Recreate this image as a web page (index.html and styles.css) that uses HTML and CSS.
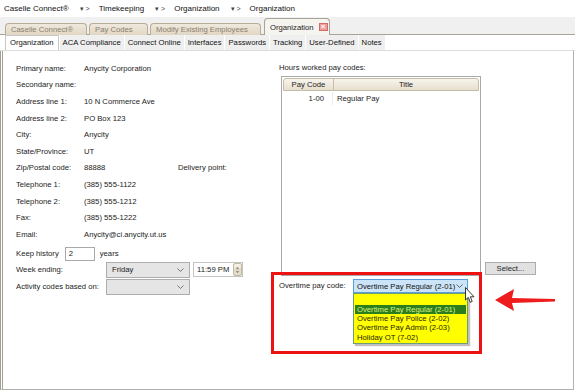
FILE: index.html
```html
<!DOCTYPE html>
<html lang="en">
<head>
    <meta charset="UTF-8">
    <title>Organization</title>
    <link rel="stylesheet" href="styles.css">
</head>
<body>
    <div class="window">
        <div class="crumbs">
            <span>Caselle Connect®</span><span class="sep">▾ &gt;</span>
            <span>Timekeeping</span><span class="sep">▾ &gt;</span>
            <span>Organization</span><span class="sep">▾ &gt;</span>
            <span>Organization</span>
        </div>

        <div class="doc-tabs">
            <div class="doc-tab tab-a">Caselle Connect®</div>
            <div class="doc-tab tab-b">Pay Codes</div>
            <div class="doc-tab tab-c">Modify Existing Employees</div>
            <div class="doc-tab active">Organization <span class="close">×</span></div>
        </div>

        <div class="prop-tabs">
            <div class="prop-tab active">Organization</div>
            <div class="prop-tab">ACA Compliance</div>
            <div class="prop-tab">Connect Online</div>
            <div class="prop-tab">Interfaces</div>
            <div class="prop-tab">Passwords</div>
            <div class="prop-tab">Tracking</div>
            <div class="prop-tab">User-Defined</div>
            <div class="prop-tab">Notes</div>
        </div>

        <div class="panel">
            <div class="left">
                <div class="info">
                    <span>Primary name:</span><span>Anycity Corporation</span><span></span>
                    <span>Secondary name:</span><span></span><span></span>
                    <span>Address line 1:</span><span>10 N Commerce Ave</span><span></span>
                    <span>Address line 2:</span><span>PO Box 123</span><span></span>
                    <span>City:</span><span>Anycity</span><span></span>
                    <span>State/Province:</span><span>UT</span><span></span>
                    <span>Zip/Postal code:</span><span>88888</span><span>Delivery point:</span>
                    <span>Telephone 1:</span><span>(385) 555-1122</span><span></span>
                    <span>Telephone 2:</span><span>(385) 555-1212</span><span></span>
                    <span>Fax:</span><span>(385) 555-1222</span><span></span>
                    <span>Email:</span><span>Anycity@ci.anycity.ut.us</span><span></span>
                </div>

                <div class="history">
                    <span>Keep history</span>
                    <div class="textbox">2</div>
                    <span>years</span>
                </div>

                <div class="field-row">
                    <span class="field-label">Week ending:</span>
                    <div class="combo">
                        <span>Friday</span>
                        <svg class="chev" width="7" height="4" viewBox="0 0 7 4"><polyline points="0.5,0.5 3.5,3.5 6.5,0.5" fill="none" stroke="#6a6a6a" stroke-width="0.9"/></svg>
                    </div>
                    <div class="timebox">
                        <span>11:59 PM</span>
                        <div class="spin">
                            <svg width="8" height="12" viewBox="0 0 8 12">
                                <polygon points="2,4.5 6,4.5 4,2.5" fill="#777"/>
                                <line x1="0" y1="6" x2="8" y2="6" stroke="#c9bfa8" stroke-width="0.8"/>
                                <polygon points="2,7.5 6,7.5 4,9.5" fill="#777"/>
                            </svg>
                        </div>
                    </div>
                </div>

                <div class="field-row">
                    <span class="field-label">Activity codes based on:</span>
                    <div class="combo">
                        <span></span>
                        <svg class="chev" width="7" height="4" viewBox="0 0 7 4"><polyline points="0.5,0.5 3.5,3.5 6.5,0.5" fill="none" stroke="#6a6a6a" stroke-width="0.9"/></svg>
                    </div>
                </div>
            </div>

            <div class="right">
                <div class="grid-label">Hours worked pay codes:</div>
                <div class="grid-row">
                    <div class="grid">
                        <div class="grid-head">
                            <div class="col-code">Pay Code</div>
                            <div class="col-title">Title</div>
                        </div>
                        <div class="grid-line">
                            <div class="col-code">1-00</div>
                            <div class="col-title">Regular Pay</div>
                        </div>
                    </div>
                    <div class="button">Select...</div>
                </div>

                <div class="ot-row">
                    <span class="ot-label">Overtime pay code:</span>
                    <div class="ot-wrap">
                        <div class="ot-combo">
                            <span>Overtime Pay Regular (2-01)</span>
                            <svg class="chev" width="7" height="4" viewBox="0 0 7 4"><polyline points="0.5,0.5 3.5,3.5 6.5,0.5" fill="none" stroke="#555" stroke-width="0.9"/></svg>
                        </div>
                        <div class="ot-list">
                            <div class="ot-item"></div>
                            <div class="ot-item selected">Overtime Pay Regular (2-01)</div>
                            <div class="ot-item">Overtime Pay Police (2-02)</div>
                            <div class="ot-item">Overtime Pay Admin (2-03)</div>
                            <div class="ot-item">Holiday OT (7-02)</div>
                        </div>
                        <svg class="cursor" width="11" height="17" viewBox="0 0 11 17">
                            <path d="M0.5,0.5 L0.5,13 L3.3,10.4 L5.3,15.3 L7.2,14.5 L5.3,9.8 L9,9.8 Z" fill="#fff" stroke="#222" stroke-width="0.9" stroke-linejoin="round"/>
                        </svg>
                    </div>
                </div>
            </div>

            <div class="callout"></div>
            <svg class="arrow" width="62" height="24" viewBox="0 0 62 24">
                <polygon points="0,11 19,0 17,9 60,10 60,12.5 17,14 19,22" fill="#ee1c1c"/>
            </svg>
        </div>
    </div>
</body>
</html>
```

FILE: styles.css
```css
* {
    box-sizing: border-box;
}

body {
    margin: 0;
    font-family: "Liberation Sans", Arial, sans-serif;
    font-size: 7.7px;
    color: #1c1c1c;
    background-color: #fff;
}

.window {
    width: 575px;
    height: 391px;
    display: flex;
    flex-direction: column;
    overflow: hidden;
}

/* breadcrumb bar */
.crumbs {
    height: 17px;
    display: flex;
    align-items: center;
    padding-left: 4px;
    font-size: 8px;
    color: #111;
}

.crumbs .sep {
    margin: 0 9px 0 11px;
    color: #444;
    font-size: 7px;
}

/* document tabs */
.doc-tabs {
    height: 18px;
    background-color: #f0f0f0;
    border-bottom: 1px solid #aaa397;
    display: flex;
    align-items: flex-end;
    padding-left: 5px;
    gap: 2px;
}

.doc-tab {
    height: 12px;
    margin-bottom: -1px;
    padding-left: 5px;
    line-height: 11px;
    color: #8a8070;
    background: linear-gradient(#efe9dd, #e0d6c3);
    border: 1px solid #b8ac94;
    border-bottom: none;
    border-radius: 4px 4px 0 0;
    white-space: nowrap;
}

.tab-a { width: 82px; }
.tab-b { width: 59px; }
.tab-c { width: 111px; margin-right: 1px; }

.doc-tab.active {
    width: 66px;
    height: 17px;
    line-height: 15px;
    color: #1c1c1c;
    background: #f6f4ef;
    border-color: #aaa397;
    display: flex;
    align-items: center;
    gap: 5px;
}

.close {
    width: 9px;
    height: 8px;
    display: flex;
    align-items: center;
    justify-content: center;
    background-color: #f09a9a;
    border: 1px solid #d36a6a;
    color: #fff;
    font-size: 8px;
    line-height: 6px;
    font-weight: bold;
}

/* property tabs */
.prop-tabs {
    height: 16px;
    display: flex;
    align-items: flex-end;
    padding-left: 5px;
    border-bottom: 1px solid #dcdcdc;
}

.prop-tab {
    height: 15px;
    line-height: 15px;
    padding: 0 3px;
    background-color: #efefef;
    border-left: 1px solid #fff;
    color: #111;
}

.prop-tab.active {
    background-color: #fff;
    border: 1px solid #c8c8c8;
    border-bottom: none;
    padding: 0 4px;
    line-height: 14px;
}

/* main panel */
.panel {
    flex: 1;
    position: relative;
    display: flex;
    padding: 9px 0 0 13px;
    border-left: 3px double #a39d93;
    border-right: 1px solid #b0b0b0;
    border-bottom: 1px solid #b0b0b0;
    margin: 0 1px 1px 0;
}

.left {
    width: 263px;
}

.info {
    display: grid;
    grid-template-columns: 68px 94px 1fr;
    grid-auto-rows: 16.6px;
    align-items: center;
}

.history {
    display: flex;
    align-items: center;
    margin-top: 4px;
    height: 14px;
}

.textbox {
    width: 30px;
    height: 14px;
    margin: 0 5px 0 6px;
    padding-left: 3px;
    line-height: 12px;
    border: 1px solid #a9a9a9;
    background-color: #fff;
}

.field-row {
    display: flex;
    align-items: center;
    height: 16px;
    margin-top: 1px;
}

.field-label {
    width: 90px;
}

.combo {
    width: 84px;
    height: 16px;
    padding: 0 5px 0 5px;
    display: flex;
    align-items: center;
    justify-content: space-between;
    background-color: #e5e5e5;
    border: 1px solid #adadad;
}

.timebox {
    width: 50px;
    height: 15px;
    margin-left: 3px;
    display: flex;
    align-items: center;
    justify-content: space-between;
    padding-left: 3px;
    border: 1px solid #c4c4c4;
    background-color: #fff;
}

.spin {
    width: 9px;
    height: 13px;
    display: flex;
    align-items: center;
    justify-content: center;
    background: linear-gradient(#f6f1e6, #e2d9c4);
    border: 1px solid #c3b9a3;
    border-radius: 2px;
}

/* right column */
.right {
    width: 290px;
}

.grid-label {
    height: 16px;
    line-height: 16px;
}

.grid-row {
    display: flex;
    align-items: flex-end;
}

.grid {
    width: 200px;
    height: 200px;
    margin-left: 2px;
    border: 1px solid #a9a9a9;
    background-color: #fff;
}

.grid-head {
    display: flex;
    height: 13px;
    line-height: 12px;
    background: linear-gradient(#f8f5ee, #e7dfcd);
    border: 1px solid #c5bba7;
    border-radius: 3px 3px 0 0;
    margin: 1px;
}

.grid-head .col-code {
    width: 50px;
    text-align: center;
    border-right: 1px solid #c5bba7;
}

.grid-head .col-title {
    flex: 1;
    text-align: center;
}

.grid-line {
    display: flex;
    height: 13px;
    line-height: 13px;
    margin: 0 1px;
}

.grid-line .col-code {
    width: 50px;
    padding-right: 8px;
    text-align: right;
    border-right: 1px solid #ececec;
}

.grid-line .col-title {
    padding-left: 4px;
}

.button {
    width: 51px;
    height: 13px;
    margin: 0 0 1px 4px;
    line-height: 11px;
    text-align: center;
    background-color: #e1e1e1;
    border: 1px solid #adadad;
}

.ot-row {
    display: flex;
    align-items: flex-start;
    margin-top: 3px;
}

.ot-label {
    width: 74px;
    line-height: 14px;
}

.ot-wrap {
    position: relative;
}

.ot-combo {
    width: 115px;
    height: 14px;
    padding: 0 4px 0 3px;
    display: flex;
    align-items: center;
    justify-content: space-between;
    background-color: #cce4f7;
    border: 1px solid #5a9fd9;
    color: #111;
}

.ot-list {
    position: absolute;
    top: 14px;
    left: 0;
    width: 115px;
    padding: 1px 0 1px 3px;
    background-color: #ffff00;
    border: 1px solid #6e9c76;
    box-shadow: 2px 2px 1px rgba(0, 0, 0, 0.25);
    color: #262600;
}

.ot-item {
    height: 9.2px;
    line-height: 9px;
    white-space: nowrap;
}

.ot-item:first-child {
    height: 10px;
}

.ot-item.selected {
    margin-left: -2px;
    margin-right: 1px;
    padding-left: 2px;
    background-color: #2b7d1e;
    color: #d9f27a;
}

.cursor {
    position: absolute;
    top: 8px;
    left: 112px;
}

/* annotations */
.callout {
    position: absolute;
    left: 268px;
    top: 221px;
    width: 211px;
    height: 82px;
    border: 3px solid #ee1111;
}

.arrow {
    position: absolute;
    left: 492px;
    top: 238px;
}
```
